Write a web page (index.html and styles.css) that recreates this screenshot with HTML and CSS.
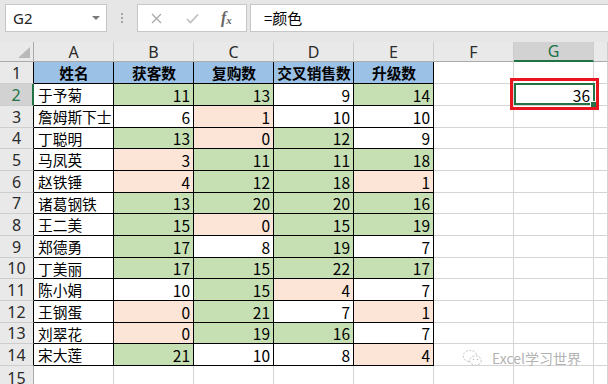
FILE: index.html
```html
<!DOCTYPE html>
<html lang="zh">
<head>
    <meta charset="UTF-8">
    <title>Excel</title>
    <link rel="stylesheet" href="styles.css">
</head>
<body>

<div class="bar">
    <div class="namebox"><span>G2</span><span class="drop"></span></div>
    <div class="grip"><i></i><i></i><i></i></div>
    <div class="fxbtns">
        <svg class="ic-x" width="11" height="11" viewBox="0 0 11 11"><path d="M1 1L10 10M10 1L1 10" stroke="#a9a9a9" stroke-width="1.3" fill="none"/></svg>
        <svg class="ic-ok" width="13" height="11" viewBox="0 0 13 11"><path d="M1 6L4.5 9.5L12 1.5" stroke="#bdbdbd" stroke-width="1.6" fill="none"/></svg>
        <span class="fx">f<sub>x</sub></span>
    </div>
    <div class="formula">=颜色</div>
</div>

<div class="sheet">
    <div class="hd corner"><svg width="12" height="11" viewBox="0 0 12 11"><polygon points="12,0 12,11 0,11" fill="#b9b9b9"/></svg></div>
    <div class="hd">A</div><div class="hd">B</div><div class="hd">C</div><div class="hd">D</div><div class="hd">E</div><div class="hd">F</div><div class="hd sel">G</div><div class="hd"></div>

    <div class="rh tb">1</div>
    <div class="c t b">姓名</div><div class="c t b">获客数</div><div class="c t b">复购数</div><div class="c t b">交叉销售数</div><div class="c t b">升级数</div>
    <div class="c"></div><div class="c"></div><div class="c"></div>

    <div class="rh tb sel">2</div>
    <div class="c t">于予菊</div><div class="c t n g">11</div><div class="c t n g">13</div><div class="c t n">9</div><div class="c t n g">14</div>
    <div class="c"></div>
    <div class="c n act"><span>36</span><i class="selbox"></i><i class="fill"></i><i class="mark"></i></div>
    <div class="c"></div>

    <div class="rh tb">3</div>
    <div class="c t">詹姆斯下士</div><div class="c t n">6</div><div class="c t n p">1</div><div class="c t n">10</div><div class="c t n">10</div>
    <div class="c"></div><div class="c"></div><div class="c"></div>

    <div class="rh tb">4</div>
    <div class="c t">丁聪明</div><div class="c t n g">13</div><div class="c t n p">0</div><div class="c t n g">12</div><div class="c t n">9</div>
    <div class="c"></div><div class="c"></div><div class="c"></div>

    <div class="rh tb">5</div>
    <div class="c t">马凤英</div><div class="c t n p">3</div><div class="c t n g">11</div><div class="c t n g">11</div><div class="c t n g">18</div>
    <div class="c"></div><div class="c"></div><div class="c"></div>

    <div class="rh tb">6</div>
    <div class="c t">赵铁锤</div><div class="c t n p">4</div><div class="c t n g">12</div><div class="c t n g">18</div><div class="c t n p">1</div>
    <div class="c"></div><div class="c"></div><div class="c"></div>

    <div class="rh tb">7</div>
    <div class="c t">诸葛钢铁</div><div class="c t n g">13</div><div class="c t n g">20</div><div class="c t n g">20</div><div class="c t n g">16</div>
    <div class="c"></div><div class="c"></div><div class="c"></div>

    <div class="rh tb">8</div>
    <div class="c t">王二美</div><div class="c t n g">15</div><div class="c t n p">0</div><div class="c t n g">15</div><div class="c t n g">19</div>
    <div class="c"></div><div class="c"></div><div class="c"></div>

    <div class="rh tb">9</div>
    <div class="c t">郑德勇</div><div class="c t n g">17</div><div class="c t n">8</div><div class="c t n g">19</div><div class="c t n">7</div>
    <div class="c"></div><div class="c"></div><div class="c"></div>

    <div class="rh tb">10</div>
    <div class="c t">丁美丽</div><div class="c t n g">17</div><div class="c t n g">15</div><div class="c t n g">22</div><div class="c t n g">17</div>
    <div class="c"></div><div class="c"></div><div class="c"></div>

    <div class="rh tb">11</div>
    <div class="c t">陈小娟</div><div class="c t n">10</div><div class="c t n g">15</div><div class="c t n p">4</div><div class="c t n">7</div>
    <div class="c"></div><div class="c"></div><div class="c"></div>

    <div class="rh tb">12</div>
    <div class="c t">王钢蛋</div><div class="c t n p">0</div><div class="c t n g">21</div><div class="c t n">7</div><div class="c t n p">1</div>
    <div class="c"></div><div class="c"></div><div class="c"></div>

    <div class="rh tb">13</div>
    <div class="c t">刘翠花</div><div class="c t n p">0</div><div class="c t n g">19</div><div class="c t n g">16</div><div class="c t n">7</div>
    <div class="c"></div><div class="c"></div><div class="c"></div>

    <div class="rh tb">14</div>
    <div class="c t">宋大莲</div><div class="c t n g">21</div><div class="c t n">10</div><div class="c t n">8</div><div class="c t n p">4</div>
    <div class="c"></div><div class="c"></div><div class="c"></div>

    <div class="rh last">15</div>
    <div class="c"></div><div class="c"></div><div class="c"></div><div class="c"></div><div class="c"></div><div class="c"></div><div class="c"></div><div class="c"></div>

    <div class="wm">
        <svg width="21" height="18" viewBox="0 0 21 18">
            <ellipse cx="8" cy="7" rx="6.8" ry="5.6" fill="none" stroke="#bfbfbf" stroke-width="1" stroke-dasharray="2 1.5"/>
            <ellipse cx="13.5" cy="11.5" rx="5.8" ry="4.7" fill="#fff" stroke="#bfbfbf" stroke-width="1" stroke-dasharray="2 1.5"/>
            <circle cx="11.5" cy="10.5" r="0.8" fill="#bfbfbf"/>
            <circle cx="15.5" cy="10.5" r="0.8" fill="#bfbfbf"/>
        </svg>
        <span>Excel学习世界</span>
    </div>
</div>

</body>
</html>
```

FILE: styles.css
```css
* {
    box-sizing: border-box;
    margin: 0;
    padding: 0;
}
body {
    width: 608px;
    height: 384px;
    overflow: hidden;
    background: #fff;
    font-family: "Noto Sans CJK SC", sans-serif;
    color: #000;
}

/* formula bar */
.bar {
    height: 42px;
    background: #e6e6e6;
    display: flex;
    align-items: flex-start;
    padding: 4px 0 0 5px;
}
.namebox {
    width: 102px;
    height: 28px;
    background: #fff;
    border: 1px solid #c6c6c6;
    display: flex;
    align-items: center;
    justify-content: space-between;
    padding: 0 6px 0 7px;
    font-family: "Noto Sans", sans-serif;
    font-size: 15px;
    color: #222;
}
.drop {
    border-left: 4px solid transparent;
    border-right: 4px solid transparent;
    border-top: 4px solid #7a7a7a;
}
.grip {
    width: 30px;
    height: 28px;
    display: flex;
    flex-direction: column;
    align-items: center;
    justify-content: center;
    gap: 2px;
}
.grip i {
    width: 2px;
    height: 2px;
    background: #a6a6a6;
}
.fxbtns {
    width: 110px;
    height: 28px;
    background: #fff;
    border: 1px solid #c6c6c6;
    display: flex;
    align-items: center;
    padding-left: 13px;
}
.ic-ok {
    margin-left: 24px;
}
.fx {
    margin-left: 22px;
    font-family: "Liberation Serif", serif;
    font-style: italic;
    font-weight: bold;
    font-size: 16px;
    color: #666;
    line-height: 1;
}
.fx sub {
    font-size: 11px;
    vertical-align: -1px;
}
.formula {
    flex: 1;
    height: 28px;
    margin-left: 3px;
    background: #fff;
    border: 1px solid #c6c6c6;
    border-right: none;
    padding-left: 13px;
    font-size: 15px;
    line-height: 25px;
}

/* grid */
.sheet {
    position: relative;
    height: 342px;
    display: grid;
    grid-template-columns: 34px repeat(7, 80px) 1fr;
    grid-template-rows: 20px 22px 22px 22px 21px 22px 22px 21px 22px 22px 21px 22px 22px 21px 22px 1fr;
    font-size: 14.7px;
}
.hd {
    background: #e9e9e9;
    border-right: 1px solid #cdcdcd;
    border-bottom: 1px solid #ababab;
    display: flex;
    align-items: center;
    justify-content: center;
    font-family: "Noto Sans", sans-serif;
    font-size: 16px;
    color: #2b2b2b;
}
.hd.corner {
    justify-content: flex-end;
    align-items: flex-end;
    padding: 0 3px 3px 0;
    border-right-color: #ababab;
}
.hd.sel {
    background: #d2d2d2;
    color: #217346;
    border-bottom: 2px solid #217346;
}
.rh {
    background: #e9e9e9;
    border-right: 1px solid #ababab;
    border-bottom: 1px solid #cdcdcd;
    display: flex;
    align-items: center;
    justify-content: center;
    font-family: "Noto Sans", sans-serif;
    font-size: 16px;
    color: #2b2b2b;
}
.rh.last {
    align-items: flex-start;
    padding-top: 1px;
}
.rh.tb {
    border-right-color: #000;
}
.rh.sel {
    background: #d2d2d2;
    color: #217346;
    border-right: 2px solid #217346;
}
.c {
    border-right: 1px solid #d4d4d4;
    border-bottom: 1px solid #d4d4d4;
    display: flex;
    align-items: center;
    padding: 0 3px 0 4px;
    white-space: nowrap;
}
.n {
    justify-content: flex-end;
    font-size: 15.5px;
}
.t {
    border-color: #000;
}
.b {
    background: #9bc2e6;
    font-weight: bold;
    justify-content: center;
}
.g {
    background: #c6e0b4;
}
.p {
    background: #fce4d6;
}

/* active cell */
.act {
    position: relative;
}
.selbox {
    position: absolute;
    left: 0;
    top: -1px;
    right: -2px;
    bottom: 0;
    border: 2px solid #217346;
}
.fill {
    position: absolute;
    right: -3px;
    bottom: -2px;
    width: 6px;
    height: 6px;
    background: #217346;
    border-left: 1px solid #fff;
    border-top: 1px solid #fff;
}
.mark {
    position: absolute;
    left: -4px;
    top: -6px;
    right: -6px;
    bottom: -5px;
    border: 3px solid #e8141f;
}

/* watermark */
.wm {
    position: absolute;
    left: 462px;
    top: 306px;
    display: flex;
    align-items: center;
    gap: 9px;
    font-size: 14px;
    color: #b3b3b3;
}
```
